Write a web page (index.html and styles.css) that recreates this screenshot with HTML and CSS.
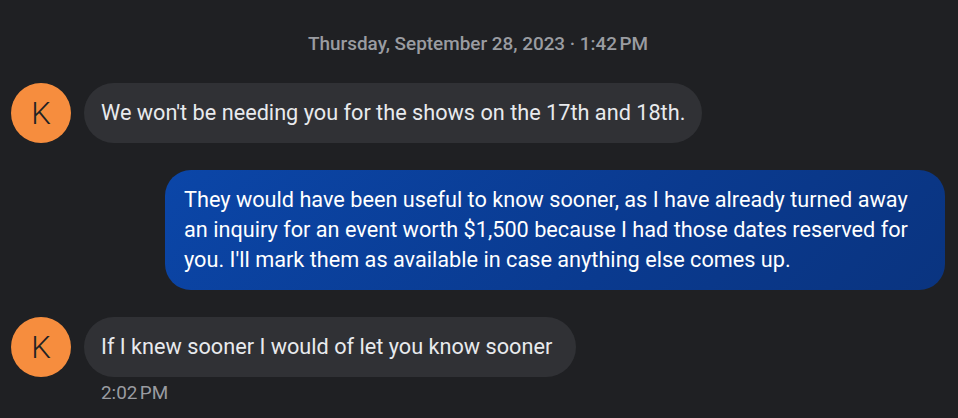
FILE: index.html
```html
<!DOCTYPE html>
<html>
<head>
<meta charset="utf-8">
<link rel="stylesheet" href="styles.css">
</head>
<body>
<div class="chat">
  <div class="day">Thursday, September 28, 2023 · 1:42&#8239;PM</div>
  <div class="row in first">
    <div class="avatar">K</div>
    <div class="bubble">We won't be needing you for the shows on the 17th and 18th.</div>
  </div>
  <div class="row out">
    <div class="bubble blue">They would have been useful to know sooner, as I have already turned away an inquiry for an event worth $1,500 because I had those dates reserved for you. I'll mark them as available in case anything else comes up.</div>
  </div>
  <div class="row in last">
    <div class="avatar">K</div>
    <div class="bubble wide">If I knew sooner I would of let you know sooner</div>
  </div>
  <div class="time">2:02&#8239;PM</div>
</div>
</body>
</html>
```
FILE: styles.css
```css
html, body {
  margin: 0;
  padding: 0;
  background: #1f2023;
  width: 958px;
  height: 418px;
  overflow: hidden;
}
.chat {
  font-family: Roboto, "Noto Sans", sans-serif;
  display: flex;
  flex-direction: column;
  padding: 0 13px 0 11px;
}
.day {
  text-align: center;
  color: #9a9ca1;
  font-size: 18.9px;
  font-weight: 500;
  line-height: 22px;
  margin-top: 33px;
  margin-bottom: 28px;
}
.row {
  display: flex;
  align-items: center;
}
.row.out {
  justify-content: flex-end;
  margin-top: 27px;
  margin-bottom: 27px;
}
.avatar {
  width: 60px;
  height: 60px;
  border-radius: 50%;
  background: #f68d3e;
  color: #202124;
  font-weight: 300;
  font-size: 31px;
  display: flex;
  align-items: center;
  justify-content: center;
  flex: none;
  margin-right: 13px;
}
.bubble {
  background: #303135;
  color: #e8eaed;
  font-size: 21.7px;
  line-height: 30px;
  padding: 15px 17px;
  border-radius: 30px;
}
.bubble.wide {
  padding-right: 24px;
}
.bubble.blue {
  background: linear-gradient(135deg, #0b46a8 0%, #0a3a8f 60%, #0a3480 100%);
  color: #ffffff;
  border-radius: 26px;
  width: 744px;
  padding: 15px 17px 15px 19px;
}
.time {
  color: #9a9ca1;
  font-size: 18.9px;
  line-height: 22px;
  margin-left: 90px;
  margin-top: 5px;
}
```
